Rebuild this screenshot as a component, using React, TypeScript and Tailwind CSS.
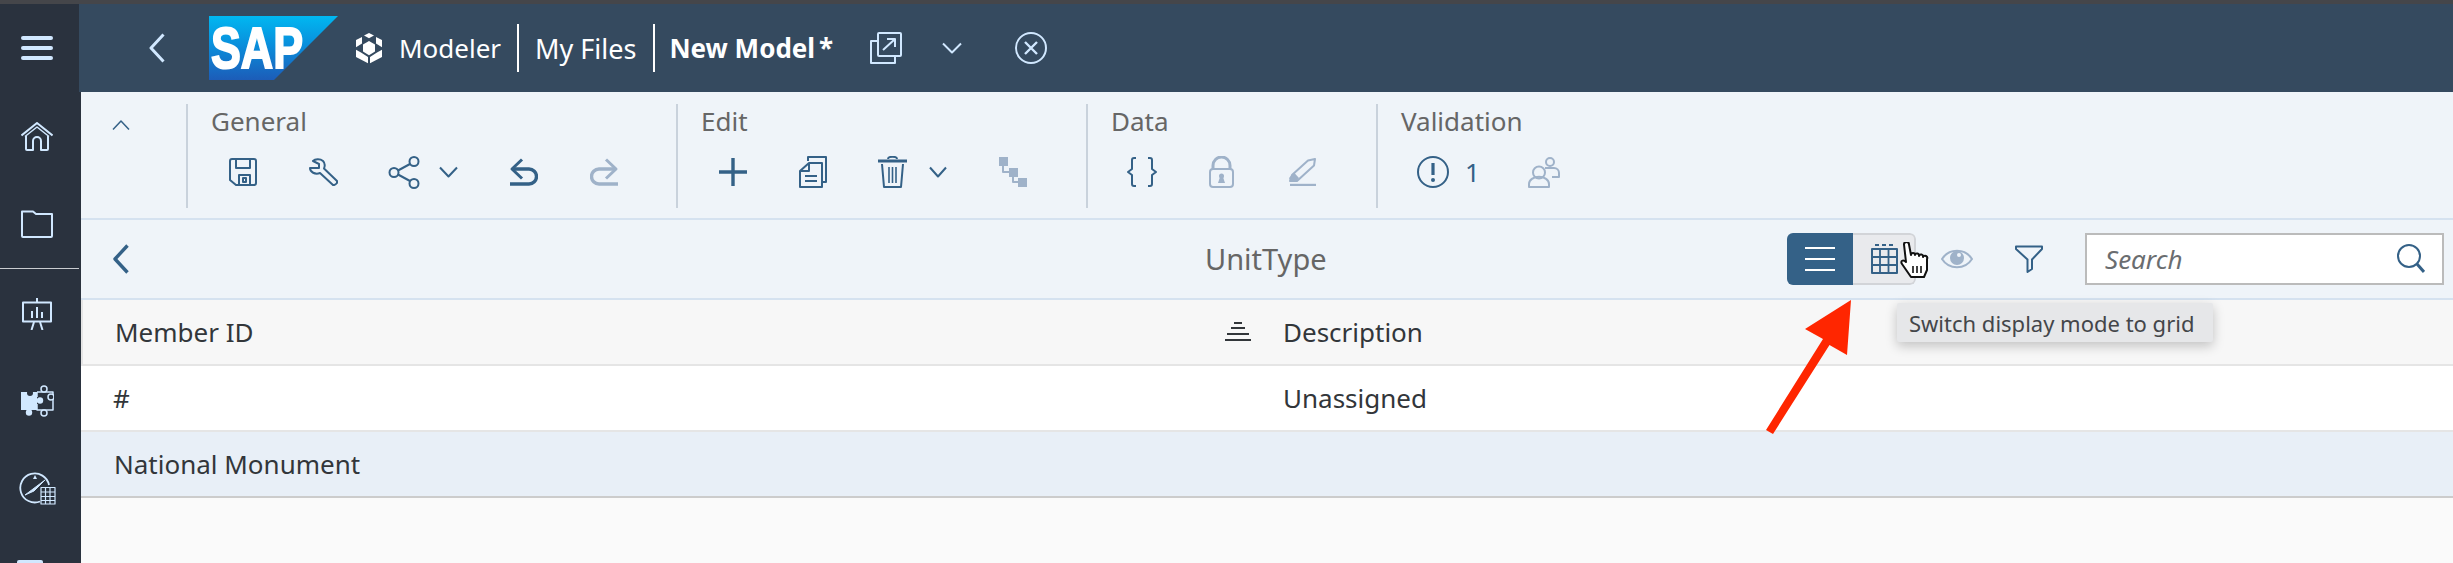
import type { ReactNode } from "react";

const FONT = "font-['Noto_Sans','Liberation_Sans',sans-serif]";

function Ico({ w, h, className, children }: { w: number; h: number; className?: string; children: ReactNode }) {
  return (
    <svg
      width={w}
      height={h}
      viewBox={`0 0 ${w} ${h}`}
      fill="none"
      stroke="currentColor"
      strokeWidth={2}
      strokeLinejoin="round"
      className={`shrink-0 ${className ?? ""}`}
    >
      {children}
    </svg>
  );
}

function ChevronDown({ w = 18 }: { w?: number }) {
  return (
    <Ico w={w} h={12}>
      <path d={`M1 1.5 L${w / 2} 10.5 L${w - 1} 1.5`} />
    </Ico>
  );
}

function SapLogo() {
  return (
    <svg width="129" height="64" viewBox="0 0 129 64" className="shrink-0">
      <defs>
        <linearGradient id="sapg" x1="0" y1="0" x2="0" y2="1">
          <stop offset="0" stopColor="#00b8f1" />
          <stop offset="0.45" stopColor="#0a8fdc" />
          <stop offset="1" stopColor="#1c5cb8" />
        </linearGradient>
      </defs>
      <polygon points="0,0 129,0 65,64 0,64" fill="url(#sapg)" />
      <text
        x="2"
        y="52"
        fontFamily="Liberation Sans"
        fontWeight="700"
        fontSize="57"
        textLength="92"
        lengthAdjust="spacingAndGlyphs"
        fill="#fff"
        stroke="#fff"
        strokeWidth="2"
      >
        SAP
      </text>
    </svg>
  );
}

function Sidebar() {
  return (
    <aside className="w-[81px] shrink-0 bg-[#2a323e] text-[#d1e8ff] flex flex-col items-start overflow-hidden">
      <div className="ml-[21px] mt-[32px] flex flex-col gap-[6px]">
        <div className="w-[32px] h-[4px] rounded-full bg-[#d1e8ff]" />
        <div className="w-[32px] h-[4px] rounded-full bg-[#d1e8ff]" />
        <div className="w-[32px] h-[4px] rounded-full bg-[#d1e8ff]" />
      </div>
      <Ico w={32} h={29} className="ml-[21px] mt-[62px]">
        <path d="M0.5 13.5 L16 1 L31.5 13.5" />
        <path d="M4 14.5 L16 5 L28 14.5" strokeWidth={1.5} />
        <path d="M5 14 V27 a1 1 0 0 0 1 1 H12 V19 a4 4 0 0 1 8 0 V28 H26 a1 1 0 0 0 1 -1 V14" />
      </Ico>
      <Ico w={32} h={28} className="ml-[21px] mt-[59px]">
        <path d="M1 26 V1.5 H12 L15 4 H31 V26 a1 1 0 0 1 -1 1 H2 a1 1 0 0 1 -1 -1 Z" />
      </Ico>
      <div className="w-[79px] h-[2px] bg-[#c9ccd0] mt-[30px]" />
      <Ico w={32} h={32} className="ml-[21px] mt-[29px]">
        <rect x="2" y="4.5" width="28" height="19" />
        <path d="M16 0 V4 M11 20 V13 M16 20 V9 M21 20 V14" />
        <path d="M13 24 L10.5 32 M19 24 L21.5 32" />
      </Ico>
      <Ico w={34} h={32} className="ml-[20px] mt-[55px]">
        <rect x="1" y="7" width="16" height="18" fill="currentColor" stroke="none" />
        <circle cx="10" cy="8" r="3" fill="#2a323e" stroke="none" />
        <circle cx="9" cy="27.5" r="3.2" fill="currentColor" stroke="none" />
        <circle cx="20" cy="15.5" r="3.2" fill="currentColor" stroke="none" />
        <path d="M17 7 H33 V25 H17 V19 M17 12 V7" strokeWidth={1.5} />
        <circle cx="24" cy="4" r="3" fill="#2a323e" strokeWidth={1.5} />
        <circle cx="24" cy="28" r="3" fill="#2a323e" strokeWidth={1.5} />
        <circle cx="31" cy="12" r="3" fill="#2a323e" strokeWidth={1.5} />
      </Ico>
      <Ico w={37} h={33} className="ml-[19px] mt-[55px]">
        <path d="M21 29.5 A14.5 14.5 0 1 1 30 13" strokeWidth={1.8} />
        <path d="M6 23 L26 8 L15 19 Z" fill="currentColor" strokeWidth={1} />
        <path d="M16 3 l-2 4 h4 Z" fill="currentColor" stroke="none" />
        <path
          d="M22 15.5 H36 V32 H22 Z M22 20 H36 M22 24.5 H36 M22 28.5 H36 M26.5 15.5 V32 M31 15.5 V32"
          strokeWidth={1.2}
        />
      </Ico>
      <div className="ml-[17px] mt-[55px] w-[26px] h-[6px] rounded-t-[2px] bg-[#d1e8ff]" />
    </aside>
  );
}

function Header() {
  return (
    <header className="h-[88px] -ml-[2px] shrink-0 bg-[#354a5f] text-white flex items-center text-[26px] leading-none">
      <Ico w={16} h={30} className="ml-[70px] text-[#d1e8ff]">
        <path d="M14.5 1.5 L2 15 L14.5 28.5" strokeWidth={3} />
      </Ico>
      <div className="ml-[44px]">
        <SapLogo />
      </div>
      <Ico w={28} h={32} className="ml-[17px] text-white">
        <g transform="scale(1 0.89)" stroke="none" fill="currentColor">
          <path d="M14 1 L19 4 L14 7 L9 4 Z" />
          <path d="M1 9 L7 5.5 L7 13 L1 17 Z M27 9 L21 5.5 L21 13 L27 17 Z" />
          <path d="M14 10 L20 14 V22 L14 26 L8 22 V14 Z" />
          <path d="M1 20 L6 23 L13 28 V35 L1 28 Z M27 20 L22 23 L15 28 V35 L27 28 Z" />
        </g>
      </Ico>
      <span className="ml-[16px]">Modeler</span>
      <div className="ml-[16px] w-[2px] h-[48px] bg-white" />
      <span className="ml-[16px] text-[27px]">My Files</span>
      <div className="ml-[17px] w-[2px] h-[48px] bg-white" />
      <span className="ml-[14px] font-bold">New Model</span>
      <span className="ml-[4px] font-bold">*</span>
      <Ico w={32} h={32} className="ml-[37px] text-[#d1e8ff]">
        <path d="M8 9 H1 V31 H25 V25" />
        <rect x="8" y="1" width="23" height="23" rx="1" />
        <path d="M13 18 L25 7 M17 7 H25 V15" />
      </Ico>
      <div className="ml-[40px] text-[#d1e8ff]">
        <ChevronDown w={20} />
      </div>
      <Ico w={32} h={32} className="ml-[53px] text-[#d1e8ff]">
        <circle cx="16" cy="16" r="15" />
        <path d="M10 10 L22 22 M22 10 L10 22" strokeWidth={2.4} />
      </Ico>
    </header>
  );
}

function Group({ label, w, children }: { label: string; w: string; children: ReactNode }) {
  return (
    <div className={`${w} h-[104px] shrink-0 border-l-2 border-[#c9d2dc] pl-[23px]`}>
      <div className="text-[26px] leading-[34px] text-[#666666]">{label}</div>
      <div className="flex items-center h-[36px] mt-[16px] text-[#346187]">{children}</div>
    </div>
  );
}

function Toolbar() {
  const off = "text-[#9fb2c9]";
  return (
    <div className="h-[128px] shrink-0 bg-[#eff4f9] border-b-2 border-[#d5e2f0] flex pt-[12px]">
      <div className="w-[105px] shrink-0 text-[#346187] pl-[31px] pt-[16px]">
        <Ico w={18} h={10}>
          <path d="M1 9.5 L9 1 L17 9.5" strokeWidth={1.5} />
        </Ico>
      </div>
      <Group label="General" w="w-[490px]">
        <Ico w={28} h={28} className="ml-[18px]">
          <path d="M1 3 a2 2 0 0 1 2 -2 H25 a2 2 0 0 1 2 2 V25 a2 2 0 0 1 -2 2 H7 L1 22 Z" />
          <path d="M7 1 V10 H21 V1" />
          <path d="M10 27 V17 H21 V27 M14 20 V24 H17 V20 Z" />
        </Ico>
        <Ico w={30} h={28} className="ml-[51px]">
          <path d="M15 3 C12 0.5 7 1 5 3 L11 6 V10 L2 10 C2 14 7 17 12 15 L25 27 Q27 27.5 29 25 V23 L16 10.5 C17 8 17 5 15 3 Z" />
        </Ico>
        <Ico w={32} h={33} className="ml-[50px]">
          <circle cx="6" cy="16.5" r="4.5" />
          <circle cx="26" cy="5.5" r="4.5" />
          <circle cx="26" cy="27.5" r="4.5" />
          <path d="M10 14.5 L22 8 M10 18.5 L22 25" />
        </Ico>
        <div className="ml-[19px]">
          <ChevronDown w={19} />
        </div>
        <Ico w={29} h={28} className="ml-[51px]">
          <path d="M13 1.5 L3 11 L13 20.5" strokeWidth={3} />
          <path d="M4 11 H20 a7.5 7.5 0 0 1 0 15 H1" strokeWidth={3.4} />
        </Ico>
        <Ico w={29} h={28} className={`ml-[52px] ${off}`}>
          <path d="M16 1.5 L26 11 L16 20.5" strokeWidth={3} />
          <path d="M25 11 H9 a7.5 7.5 0 0 0 0 15 H28" strokeWidth={3.4} />
        </Ico>
      </Group>
      <Group label="Edit" w="w-[410px]">
        <Ico w={28} h={28} className="ml-[18px]">
          <path d="M14 0 V28 M0 14 H28" strokeWidth={3.4} />
        </Ico>
        <Ico w={28} h={32} className="ml-[52px]">
          <path d="M9 5 V1 H27 V26 H24" />
          <path d="M10 7 H23 V31 H1 V15 Z M10 7 V15 H1" />
          <path d="M6 20 H18 M6 25 H18" />
        </Ico>
        <Ico w={29} h={32} className="ml-[51px]">
          <path d="M0 5 H29" strokeWidth={3} />
          <path d="M10 3 a4 2 0 0 1 9 0" />
          <path d="M4 8 L6 31 H23 L25 8" />
          <path d="M11 11 V27 M14.5 11 V27 M18 11 V27" strokeWidth={1.6} />
        </Ico>
        <div className="ml-[22px]">
          <ChevronDown w={18} />
        </div>
        <Ico w={28} h={30} className={`ml-[52px] ${off}`}>
          <rect x="0" y="0" width="9" height="9" fill="currentColor" stroke="none" />
          <rect x="10" y="11" width="9" height="9" fill="currentColor" stroke="none" />
          <rect x="19" y="21" width="9" height="9" fill="currentColor" stroke="none" />
          <path d="M4 9 V15 H10 M14 20 V25 H19" />
        </Ico>
      </Group>
      <Group label="Data" w="w-[290px]">
        <Ico w={30} h={30} className="ml-[16px]">
          <path d="M9 1 H7 a2 2 0 0 0 -2 2 V12 L1 15 L5 18 V27 a2 2 0 0 0 2 2 H9" />
          <path d="M21 1 H23 a2 2 0 0 1 2 2 V12 L29 15 L25 18 V27 a2 2 0 0 1 -2 2 H21" />
        </Ico>
        <Ico w={25} h={32} className={`ml-[52px] ${off}`}>
          <rect x="1" y="13" width="23" height="18" rx="3" />
          <path d="M4 13 V9.5 a8.5 8.5 0 0 1 17 0 V13" strokeWidth={3} />
          <circle cx="12.5" cy="20" r="2.5" fill="currentColor" stroke="none" />
          <path d="M9 27 L11 21 H14 L16 27 Z" fill="currentColor" stroke="none" />
        </Ico>
        <Ico w={28} h={28} className={`ml-[54px] ${off}`}>
          <path d="M4 17 L20 2.5 L27 1 L26 7.5 L9 23 H2 Z" />
          <path d="M1 20 L6 14.5 L11 20 L8 24 H3 Z" fill="currentColor" stroke="none" />
          <path d="M2 27 H28" strokeWidth={2.4} />
        </Ico>
      </Group>
      <Group label="Validation" w="w-[400px]">
        <Ico w={32} h={32} className="ml-[16px]">
          <circle cx="16" cy="16" r="15" />
          <path d="M16 7 V19" strokeWidth={3.2} />
          <circle cx="16" cy="24" r="2" fill="currentColor" stroke="none" />
        </Ico>
        <span className="ml-[16px] text-[26px] leading-none">1</span>
        <Ico w={32} h={31} className={`ml-[48px] ${off}`}>
          <circle cx="11" cy="15.5" r="6" />
          <path d="M1 30 V27 a9 6.5 0 0 1 20 0 V30 Z" />
          <circle cx="22" cy="5" r="4" />
          <path d="M17 11 H26 a5 5 0 0 1 5 5 V20 H24" />
        </Ico>
      </Group>
    </div>
  );
}

function SubHeader() {
  return (
    <div className="relative h-[80px] shrink-0 bg-[#eff4f9] border-b-2 border-[#d5e2f0] flex items-center text-[#346187]">
      <Ico w={18} h={30} className="ml-[31px]">
        <path d="M15.5 1.5 L3 15 L15.5 28.5" strokeWidth={3.4} />
      </Ico>
      <div className="absolute left-[1124px] top-[20px] text-[29px] leading-[38px] text-[#666666]">UnitType</div>
      <div className="ml-auto flex items-center pr-[9px]">
        <div className="flex h-[52px] w-[129px] rounded-[6px] overflow-hidden">
          <div className="w-[66px] bg-[#346187] flex flex-col items-center justify-center gap-[9px]">
            <div className="w-[30px] h-[2px] bg-white" />
            <div className="w-[30px] h-[2px] bg-white" />
            <div className="w-[30px] h-[2px] bg-white" />
          </div>
          <div className="flex-1 bg-[#e9eaed] border-y-2 border-r-2 border-[#d2d4d8] rounded-r-[6px] pl-[18px] flex items-center">
            <Ico w={27} h={30}>
              <path d="M4 1 H8 M11 1 H15 M18 1 H22" strokeWidth={2} />
              <rect x="1" y="5" width="25" height="24" />
              <path d="M1 13 H26 M1 21 H26 M9 5 V29 M17.5 5 V29" strokeWidth={1.8} />
            </Ico>
          </div>
        </div>
        <Ico w={32} h={24} className="ml-[25px] text-[#9fb2c9]">
          <path d="M1 12 C8 1 24 1 31 12 C24 23 8 23 1 12 Z" />
          <circle cx="16" cy="11" r="7" fill="currentColor" stroke="none" />
          <circle cx="18" cy="8" r="2" fill="#eff4f9" stroke="none" />
        </Ico>
        <Ico w={28} h={28} className="ml-[42px]">
          <path d="M1 1.5 H27 V4 L17 14.5 V24 L12.5 27 V14.5 L1 4 Z" />
        </Ico>
        <div className="ml-[42px] w-[359px] h-[52px] bg-white border-2 border-[#bbbbbb] flex items-center pl-[18px] pr-[17px]">
          <span className="flex-1 italic text-[26px] leading-none text-[#6a6d70]">Search</span>
          <Ico w={28} h={30}>
            <circle cx="12" cy="12" r="11" />
            <path d="M20 20 L27 28" strokeWidth={3} />
          </Ico>
        </div>
      </div>
    </div>
  );
}

function Row({ left, right, cols, className }: { left: ReactNode; right?: string; cols: string; className: string }) {
  return (
    <div className={`grid ${cols} items-center shrink-0 text-[26px] leading-none text-[#32363a] ${className}`}>
      {left}
      {right ? <span>{right}</span> : <span />}
    </div>
  );
}

function Table() {
  return (
    <div className="flex-1 bg-[#fafafa] flex flex-col">
      <Row
        cols="grid-cols-[1200px_1fr]"
        className="h-[66px] bg-[#f7f7f7] border-b-2 border-l-2 border-[#e5e5e5]"
        left={
          <div className="flex items-center justify-between pl-[32px] pr-[32px]">
            <span>Member ID</span>
            <Ico w={26} h={20} className="text-[#32363a]">
              <path d="M9 1 H17 M6 6 H20 M2 12 H24 M0 18 H26" />
            </Ico>
          </div>
        }
        right="Description"
      />
      <Row
        cols="grid-cols-[1202px_1fr]"
        className="h-[66px] bg-white border-b-2 border-[#e5e5e5]"
        left={<span className="pl-[32px]">#</span>}
        right="Unassigned"
      />
      <Row
        cols="grid-cols-[1202px_1fr]"
        className="h-[66px] bg-[#e8eff7] border-b-2 border-[#cccccc]"
        left={<span className="pl-[33px]">National Monument</span>}
      />
    </div>
  );
}

export default function App() {
  return (
    <div className={`relative w-[2453px] h-[563px] overflow-hidden flex flex-col bg-[#fafafa] ${FONT}`}>
      <div className="h-[4px] shrink-0 bg-[#45464a]" />
      <div className="flex flex-1 min-h-0">
        <Sidebar />
        <main className="flex-1 min-w-0 flex flex-col">
          <Header />
          <Toolbar />
          <SubHeader />
          <Table />
        </main>
      </div>

      {/* tooltip */}
      <div className="absolute left-[1897px] top-[303px] w-[316px] h-[39px] bg-[#e6e7e9] rounded-[2px] shadow-[0_4px_12px_rgba(0,0,0,0.22)] flex items-center pl-[12px] text-[22px] leading-none text-[#444649] whitespace-nowrap">
        Switch display mode to grid
      </div>

      {/* hand cursor */}
      <svg width="32" height="38" viewBox="0 0 32 38" className="absolute left-[1900px] top-[242px]">
        <path
          d="M4 2.5 a2.5 2.5 0 0 1 5 0 L11 13 a2 2 0 0 1 4 0 a2 2 0 0 1 4 1 a2 2 0 0 1 4 1 a2 2 0 0 1 4 2 V28 L24 35 H11 L2 22 C0 19 3 17 6 20 Z"
          fill="#fff"
          stroke="#111"
          strokeWidth="2"
          strokeLinejoin="round"
        />
        <path d="M13 24 V31 M17 24 V31 M21 24 V31" stroke="#111" strokeWidth="1.6" />
      </svg>

      {/* annotation arrow */}
      <svg width="100" height="140" viewBox="0 0 100 140" className="absolute left-[1760px] top-[298px]">
        <polygon points="91,2 87,57 69.5,47 13,136 6,132 63,41 45,31" fill="#ff2600" />
      </svg>
    </div>
  );
}
